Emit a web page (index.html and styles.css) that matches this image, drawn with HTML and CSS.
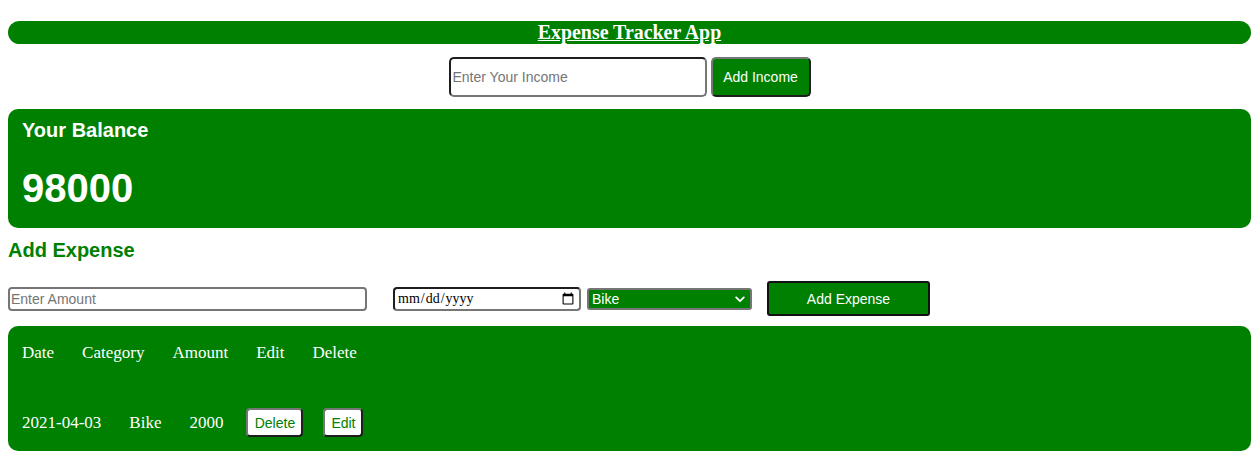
FILE: index.html
```html
<!DOCTYPE html>
<html lang="en">
<head>
<meta charset="utf-8">
<title>Expense Tracker App</title>
<link rel="stylesheet" href="styles.css">
</head>
<body>
  <header class="app-header">
    <h1 class="app-title">Expense Tracker App</h1>
  </header>

  <div class="income-row">
    <input class="income-input" type="text" placeholder="Enter Your Income">
    <button class="income-btn" type="button">Add Income</button>
  </div>

  <section class="balance-card">
    <h3 class="balance-label">Your Balance</h3>
    <h1 class="balance-value">98000</h1>
  </section>

  <h3 class="section-title">Add Expense</h3>

  <div class="expense-row">
    <input class="amount-input" type="text" placeholder="Enter Amount">
    <input class="date-input" type="date">
    <div class="select-wrap">
      <select class="category-select">
        <option>Bike</option>
        <option>Food</option>
        <option>Rent</option>
      </select>
      <svg class="select-arrow" width="10" height="7" viewBox="0 0 10 7" aria-hidden="true">
        <path d="M1.2 1.4 L5 5.2 L8.8 1.4" fill="none" stroke="#ffffff" stroke-width="1.8" stroke-linecap="round" stroke-linejoin="round"/>
      </svg>
    </div>
    <button class="expense-btn" type="button">Add Expense</button>
  </div>

  <section class="list-card">
    <div class="list-head">
      <span class="cell">Date</span>
      <span class="cell">Category</span>
      <span class="cell">Amount</span>
      <span class="cell">Edit</span>
      <span class="cell">Delete</span>
    </div>
    <div class="list-row">
      <span class="cell">2021-04-03</span>
      <span class="cell">Bike</span>
      <span class="cell cell-last">2000</span>
      <button class="row-btn row-btn-del" type="button">Delete</button>
      <button class="row-btn row-btn-edit" type="button">Edit</button>
    </div>
  </section>
</body>
</html>
```

FILE: styles.css
```css
html, body {
  background: #ffffff;
}

body {
  margin: 8px;
  font-family: "Liberation Serif", "Times New Roman", serif;
  font-size: 17px;
  color: #000000;
}

.app-header {
  margin-top: 13px;
  height: 23px;
  background: #008000;
  border-radius: 12px;
  text-align: center;
}

.app-title {
  margin: 0;
  font-family: "Liberation Serif", "Times New Roman", serif;
  font-size: 19.9px;
  line-height: 23px;
  font-weight: bold;
  color: #ffffff;
  text-decoration: underline;
}

.income-row {
  margin-top: 13px;
  display: flex;
  justify-content: center;
  gap: 4px;
  height: 40px;
}

.income-input {
  box-sizing: border-box;
  width: 258px;
  height: 40px;
  margin: 0;
  padding: 0 2px;
  font-family: "Liberation Sans", Arial, sans-serif;
  font-size: 14px;
  border: 2px solid;
  border-color: #1e1e1e #767676 #767676 #1e1e1e;
  border-radius: 5px;
  background: #ffffff;
  outline: none;
}

.income-input::placeholder,
.amount-input::placeholder {
  color: #757575;
}

.income-btn {
  box-sizing: border-box;
  width: 100px;
  height: 40px;
  margin: 0;
  padding: 0;
  font-family: "Liberation Sans", Arial, sans-serif;
  font-size: 14px;
  color: #ffffff;
  background: #008000;
  border: 2px solid;
  border-color: #767676 #1e1e1e #1e1e1e #767676;
  border-radius: 5px;
}

.balance-card {
  margin-top: 12px;
  box-sizing: border-box;
  height: 119px;
  padding: 10px 14px 0;
  background: #008000;
  border-radius: 10px;
  color: #ffffff;
  font-family: "Liberation Sans", Arial, sans-serif;
}

.balance-label {
  margin: 0;
  font-size: 20px;
  line-height: 23px;
  font-weight: bold;
}

.balance-value {
  margin: 23px 0 0;
  font-size: 40px;
  line-height: 46px;
  font-weight: bold;
}

.section-title {
  margin: 11px 0 0;
  font-family: "Liberation Sans", Arial, sans-serif;
  font-size: 20px;
  line-height: 23px;
  font-weight: bold;
  color: #008000;
}

.expense-row {
  margin-top: 19px;
  height: 35px;
  display: flex;
  align-items: center;
}

.amount-input {
  box-sizing: border-box;
  width: 359px;
  height: 24px;
  margin: 0;
  padding: 0 1px;
  font-family: "Liberation Sans", Arial, sans-serif;
  font-size: 14px;
  border: 2px solid;
  border-color: #767676;
  border-radius: 4px;
  background: #ffffff;
  outline: none;
}

.date-input {
  box-sizing: border-box;
  width: 188px;
  height: 24px;
  margin: 0 0 0 26px;
  padding: 0 2px;
  font-family: "Liberation Serif", "Times New Roman", serif;
  font-size: 14px;
  color: #000000;
  border: 2px solid;
  border-color: #1e1e1e #767676 #767676 #1e1e1e;
  border-radius: 4px;
  background: #ffffff;
}

.select-wrap {
  position: relative;
  margin-left: 6px;
  width: 165px;
  height: 22px;
}

.category-select {
  box-sizing: border-box;
  -webkit-appearance: none;
  appearance: none;
  width: 165px;
  height: 22px;
  margin: 0;
  padding: 0 20px 0 3px;
  font-family: "Liberation Sans", Arial, sans-serif;
  font-size: 14px;
  color: #ffffff;
  background: #008000;
  border: 2px solid #767676;
  border-radius: 3px;
}

.select-arrow {
  position: absolute;
  right: 7px;
  top: 8px;
  pointer-events: none;
}

.expense-btn {
  box-sizing: border-box;
  width: 163px;
  height: 35px;
  margin: 0 0 0 15px;
  padding: 0;
  font-family: "Liberation Sans", Arial, sans-serif;
  font-size: 14px;
  color: #ffffff;
  background: #008000;
  border: 2px solid #111111;
  border-radius: 3px;
}

.list-card {
  margin-top: 10px;
  box-sizing: border-box;
  height: 125px;
  padding: 18px 14px 0;
  background: #008000;
  border-radius: 10px;
  color: #ffffff;
}

.list-head {
  display: flex;
  align-items: center;
  height: 18px;
  line-height: 18px;
}

.list-row {
  margin-top: 46px;
  display: flex;
  align-items: center;
  height: 29px;
}

.cell {
  margin-right: 28px;
}

.list-row .cell-last {
  margin-right: 23px;
}

.row-btn {
  box-sizing: border-box;
  height: 29px;
  margin: 0;
  font-family: "Liberation Sans", Arial, sans-serif;
  font-size: 14px;
  color: #008000;
  background: #ffffff;
  border: 2px solid;
  border-color: #767676 #1e1e1e #1e1e1e #767676;
  border-radius: 4px;
}

.row-btn-del {
  width: 57px;
  padding: 0;
  margin-right: 20px;
}

.row-btn-edit {
  width: 40px;
  padding: 0;
}
```
